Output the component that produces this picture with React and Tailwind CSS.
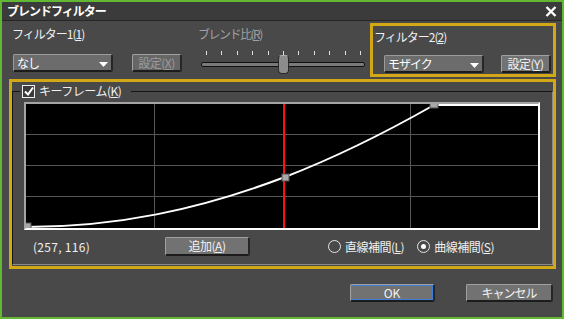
import React from "react";

const font = "font-['Noto_Sans_CJK_JP','Noto_Sans',sans-serif]";

function Dropdown({ value, className = "" }) {
  return (
    <div
      className={`relative flex items-center h-[18px] w-[100px] rounded-[2px] bg-[#6c6c6c] border-t border-l border-[#9a9a9a] border-r-2 border-b-2 border-r-[#262626] border-b-[#1c1c1c] pl-[3px] text-[12px] leading-none text-white tracking-[-1px] ${className}`}
    >
      {value}
      <svg
        className="absolute right-[3px] top-[7px]"
        width="9"
        height="5"
        viewBox="0 0 9 5"
      >
        <path d="M0 0 H9 L4.5 5 Z" fill="#ffffff" />
      </svg>
    </div>
  );
}

function Btn({ children, className = "", disabled, focused }) {
  return (
    <div
      className={`flex items-center justify-center h-[18px] rounded-[2px] border-t border-l border-[#a0a0a0] border-r-2 border-b-2 border-r-[#262626] border-b-[#1c1c1c] text-[12px] leading-none ${
        disabled ? "bg-[#666666] text-[#9c9c9c]" : "bg-[#727272] text-[#f2f2f2]"
      } ${className}`}
    >
      {focused ? (
        <div className="flex items-center justify-center w-full h-full border border-[#3f7fd8]">
          {children}
        </div>
      ) : (
        children
      )}
    </div>
  );
}

function Radio({ checked, label, k }) {
  return (
    <div className="flex items-center gap-[4px]">
      <div className="flex items-center justify-center w-[13px] h-[13px] rounded-full border-[1.5px] border-[#e6e6e6]">
        {checked && <div className="w-[5px] h-[5px] rounded-full bg-white" />}
      </div>
      <span className="text-[12px] leading-none text-[#f0f0f0] tracking-[-0.5px]">
        {label}(<u>{k}</u>)
      </span>
    </div>
  );
}

function Graph() {
  const vx = [128, 384];
  const hy = [30, 61, 92];
  return (
    <div className="ml-[11px] mt-[4px] w-[516px] h-[128px] border-2 border-t-[#a4a4a4] border-l-[#a4a4a4] border-r-white border-b-white bg-black">
      <svg width="512" height="124" viewBox="0 0 512 124" className="block">
        {vx.map((x) => (
          <rect key={x} x={x} y="0" width="1" height="124" fill="#565656" />
        ))}
        {hy.map((y) => (
          <rect key={y} x="0" y={y} width="512" height="1" fill="#565656" />
        ))}
        <path
          d="M0 123 C90 123 172 106 259 73 C308 54 357 30 408 1 L512 1"
          fill="none"
          stroke="#ffffff"
          strokeWidth="2"
        />
        <rect x="257" y="0" width="2" height="124" fill="#ff1010" />
        <rect x="-1" y="119" width="6" height="6" fill="#a8a8a8" stroke="#555" />
        <rect x="256" y="70" width="7" height="7" fill="#a8a8a8" stroke="#555" />
        <rect x="404" y="-2" width="8" height="6" fill="#a8a8a8" stroke="#555" />
      </svg>
    </div>
  );
}

export default function App() {
  const ticks = Array.from({ length: 11 }, (_, i) => i);
  return (
    <div
      className={`w-[564px] h-[319px] border-2 border-[#62b832] bg-[#494949] flex flex-col ${font}`}
    >
      {/* title bar */}
      <div className="flex items-center justify-between h-[19px] bg-[#3b3b3b] border-b border-[#262626] pl-[5px] pr-[5px]">
        <span className="text-[12px] font-bold text-white tracking-[-1px] leading-none">
          ブレンドフィルター
        </span>
        <svg width="12" height="11" viewBox="0 0 12 11">
          <path d="M1.5 1 L10.5 10 M10.5 1 L1.5 10" stroke="#ffffff" strokeWidth="2.4" />
        </svg>
      </div>

      <div className="flex-1 flex flex-col pl-[7px] pr-[6px] pt-[2px]">
        {/* top row */}
        <div className="flex h-[54px]">
          <div className="flex flex-col ml-[3px] pt-[4px]">
            <span className="h-[14px] text-[12px] leading-[14px] text-[#f0f0f0] tracking-[-1px]">
              フィルター1(<u>1</u>)
            </span>
            <div className="flex mt-[13px]">
              <Dropdown value="なし" className="ml-[1px]" />
              <Btn disabled className="ml-[19px] w-[50px] tracking-[-0.5px]">
                設定(<u>X</u>)
              </Btn>
            </div>
          </div>

          <div className="flex flex-col ml-[16px] pt-[4px] w-[167px]">
            <span className="h-[14px] text-[12px] leading-[14px] text-[#a0a0a0] tracking-[-1.5px]">
              ブレンド比(<u>R</u>)
            </span>
            <div className="flex justify-between mt-[10px] ml-[8px] mr-[4px] h-[4px]">
              {ticks.map((t) => (
                <div key={t} className="w-[1px] h-[4px] bg-[#e0e0e0]" />
              ))}
            </div>
            <div className="relative mt-[7px] ml-[3px] w-[164px] h-[5px] rounded-[2px] bg-[#7a7a7a] border border-[#111111]">
              <div className="absolute left-[76px] top-[-8px] w-[11px] h-[19px] rounded-[4px] bg-[#8c8c8c] border border-[#2a2a2a] border-t-[#b0b0b0]" />
            </div>
          </div>

          <div className="flex flex-col ml-[5px] w-[186px] h-[54px] border-[3px] border-[#d2a816] pl-[1px] pt-[4px]">
            <span className="h-[14px] text-[12px] leading-[14px] text-[#f0f0f0] tracking-[-1px]">
              フィルター2(<u>2</u>)
            </span>
            <div className="flex mt-[11px]">
              <Dropdown value="モザイク" className="ml-[10px]" />
              <Btn className="ml-[17px] w-[50px] tracking-[-0.5px]">
                設定(<u>Y</u>)
              </Btn>
            </div>
          </div>
        </div>

        {/* keyframe frame */}
        <div className="mt-[2px] h-[190px] border-[3px] border-[#d2a816] pt-[2px] pb-[1px]">
          <fieldset className="h-full border border-t-[#151515] border-l-[#151515] border-r-[#8a8a8a] border-b-[#8a8a8a]">
            <legend className="ml-[7px] pl-[2px] pr-[10px] h-[14px] flex items-center gap-[4px]">
              <div className="flex items-center justify-center w-[13px] h-[13px] border-[1.5px] border-[#f0f0f0] bg-[#3a3a3a]">
                <svg width="10" height="9" viewBox="0 0 10 9">
                  <path d="M1 4.5 L4 7.5 L9 0.5" fill="none" stroke="#ffffff" strokeWidth="2" />
                </svg>
              </div>
              <span className="text-[12px] leading-none text-[#f0f0f0] tracking-[-0.5px]">
                キーフレーム(<u>K</u>)
              </span>
            </legend>

            <Graph />

            <div className="flex items-center mt-[7px] h-[19px]">
              <span className="ml-[20px] w-[132px] text-[12px] leading-none text-[#f0f0f0] tracking-[0.3px]">
                (257, 116)
              </span>
              <Btn className="w-[85px] h-[19px] tracking-[-0.5px]">
                追加(<u>A</u>)
              </Btn>
              <div className="ml-[78px] flex items-center gap-[13px]">
                <Radio label="直線補間" k="L" />
                <Radio checked label="曲線補間" k="S" />
              </div>
            </div>
          </fieldset>
        </div>

        {/* bottom buttons */}
        <div className="flex justify-end gap-[31px] mt-[15px] pr-[3px]">
          <Btn focused className="w-[85px]">
            OK
          </Btn>
          <Btn className="w-[87px] tracking-[-1px]">キャンセル</Btn>
        </div>
      </div>
    </div>
  );
}
